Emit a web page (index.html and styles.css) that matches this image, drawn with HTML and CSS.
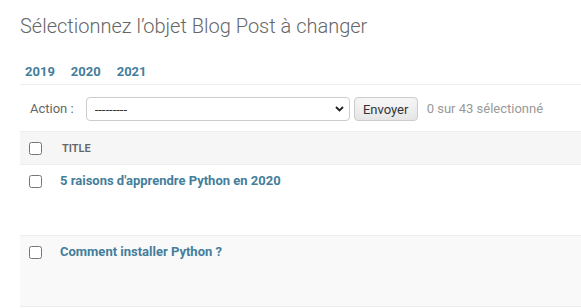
FILE: index.html
```html
<!DOCTYPE html>
<html lang="fr">
<head>
    <meta charset="UTF-8">
    <title>Sélectionnez l’objet Blog Post à changer</title>
    <link rel="stylesheet" href="styles.css">
</head>
<body>
    <div class="content">
        <h1>Sélectionnez l’objet Blog Post à changer</h1>

        <div class="changelist">
            <ul class="toplinks">
                <li><a href="#">2019</a></li>
                <li><a href="#">2020</a></li>
                <li><a href="#">2021</a></li>
            </ul>

            <div class="actions">
                <label for="action">Action :</label>
                <div class="select-wrap">
                    <select id="action" name="action">
                        <option value="">---------</option>
                        <option value="delete">Supprimer les Blog Posts sélectionnés</option>
                    </select>
                    <svg class="chevron" width="9" height="6" viewBox="0 0 9 6">
                        <path d="M1 1 L4.5 4.5 L8 1" fill="none" stroke="#222" stroke-width="1.8"/>
                    </svg>
                </div>
                <button type="submit" class="button">Envoyer</button>
                <span class="action-counter">0 sur 43 sélectionné</span>
            </div>

            <table class="result-list">
                <thead>
                    <tr>
                        <th class="action-checkbox"><input type="checkbox"></th>
                        <th class="column-title">Title</th>
                    </tr>
                </thead>
                <tbody>
                    <tr>
                        <td class="action-checkbox"><input type="checkbox"></td>
                        <td class="field-title"><a href="#">5 raisons d'apprendre Python en 2020</a></td>
                    </tr>
                    <tr class="row2">
                        <td class="action-checkbox"><input type="checkbox"></td>
                        <td class="field-title"><a href="#">Comment installer Python ?</a></td>
                    </tr>
                </tbody>
            </table>
        </div>
    </div>
</body>
</html>
```

FILE: styles.css
```css
body {
    margin: 0;
    font-family: Roboto, "Liberation Sans", Arial, sans-serif;
    color: #333;
    background: #fff;
    overflow: hidden;
}
a {
    color: #447e9b;
    text-decoration: none;
    font-weight: bold;
}
.content {
    padding: 14px 0 0 20px;
}
h1 {
    margin: 0 0 26px;
    font-size: 20px;
    line-height: 24px;
    font-weight: 300;
    color: #666;
}
.toplinks {
    list-style: none;
    margin: 0;
    padding: 0 0 4px 5px;
    display: flex;
    gap: 16px;
    font-size: 13px;
    line-height: 16px;
    border-bottom: 1px solid #eee;
}
.actions {
    display: flex;
    align-items: center;
    padding: 12px 10px 10px;
    font-size: 13px;
    line-height: 24px;
}
.actions label {
    color: #666;
}
.select-wrap {
    position: relative;
    margin-left: 12px;
}
.select-wrap select {
    appearance: none;
    -webkit-appearance: none;
    display: block;
    width: 264px;
    height: 24px;
    margin: 0;
    padding: 0 0 0 8px;
    border: 1px solid #ccc;
    border-radius: 4px;
    background: #fff;
    font-family: inherit;
    font-size: 13px;
    color: #333;
}
.chevron {
    position: absolute;
    right: 6px;
    top: 9px;
}
.button {
    margin-left: 4px;
    width: 64px;
    height: 24px;
    padding: 0;
    border: 1px solid #ccc;
    border-radius: 4px;
    background: #f7f7f7;
    box-shadow: 0 -15px 20px -10px rgba(0,0,0,0.1) inset;
    font-family: inherit;
    font-size: 13px;
    color: #333;
}
.action-counter {
    margin-left: 9px;
    color: #999;
}
.result-list {
    width: 100%;
    border-collapse: collapse;
    font-size: 13px;
}
.result-list input[type="checkbox"] {
    margin: 0;
    width: 13px;
    height: 13px;
    display: block;
}
.result-list th {
    height: 32px;
    padding: 0;
    background: #f6f6f6;
    border-top: 1px solid #eee;
    border-bottom: 1px solid #eee;
    text-align: left;
    vertical-align: middle;
}
.result-list th.column-title {
    padding-left: 10px;
    font-size: 11px;
    font-weight: 600;
    text-transform: uppercase;
    color: #666;
}
.action-checkbox {
    width: 23px;
    padding-left: 9px !important;
}
.result-list td {
    height: 52px;
    padding: 10px 0 8px;
    border-bottom: 1px solid #eee;
    vertical-align: top;
    line-height: 16px;
}
.result-list td.field-title {
    padding: 8px 0 0 8px;
}
.row2 td {
    background: #f9f9f9;
}
```
